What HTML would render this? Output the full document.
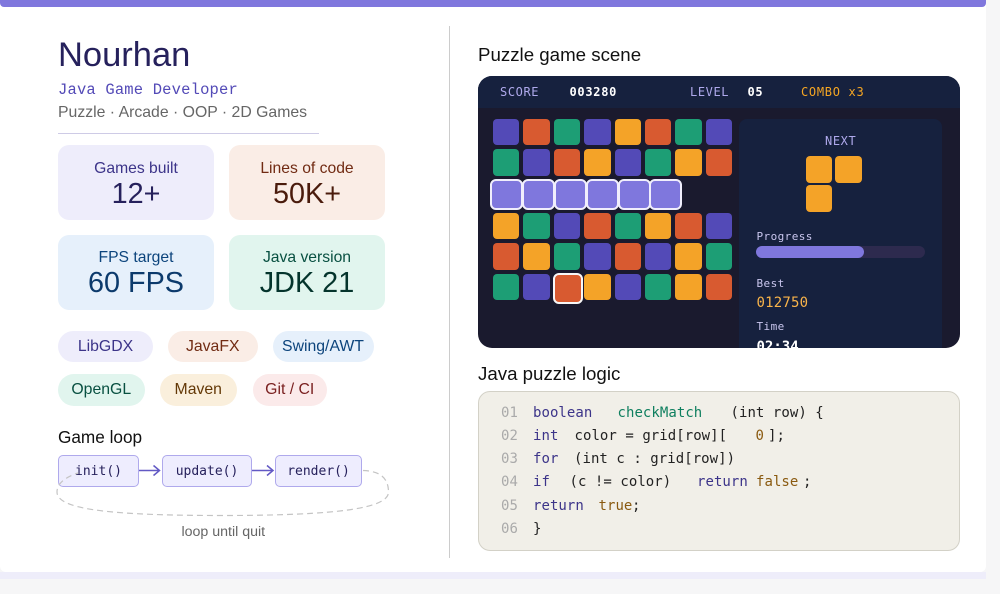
<!DOCTYPE html>
<html><head><meta charset="utf-8"><style>
html,body{margin:0;padding:0;width:1000px;height:594px;overflow:hidden;background:#f6f6f7}
*{box-sizing:border-box}
body{position:relative;font-family:"Liberation Sans",sans-serif}
.a,.t,.c span,.h span{position:absolute;white-space:pre}
.card{position:absolute;left:0;top:0;width:986px;height:572px;background:#fff;border-radius:0 0 6px 6px}
.strip{position:absolute;left:0;top:572px;width:986px;height:7px;background:#eeedfa}
.top{position:absolute;left:0;top:0;width:986px;height:7px;background:#7f77dd;border-radius:0 0 4px 4px}
.s{position:absolute;width:156px;height:75px;border-radius:11px;text-align:center}
.s div{position:absolute;left:0;right:0;white-space:nowrap}
.s .l{top:14.5px;font-size:15.7px;line-height:18px}
.s .v{top:31.5px;font-size:28.8px;line-height:34px}
.p{position:absolute;height:31.5px;border-radius:16px;text-align:center;font-size:15.8px;line-height:31.5px}
.f{position:absolute;top:455px;height:32px;background:#eeedfe;border:1px solid #afa9ec;border-radius:5px;text-align:center;font:13px/32px "DejaVu Sans Mono",monospace;color:#26215c}
.game{position:absolute;left:478px;top:75.5px;width:482px;height:272px;background:#1a1a2e;border-radius:14px;overflow:hidden}
.hud{position:absolute;left:0;top:0;width:482px;height:32.5px;background:#16213e}
.h span{top:8.5px;font:12px/16px "DejaVu Sans Mono",monospace}
.side{position:absolute;left:261px;top:43.5px;width:203px;height:240px;background:#16213e;border-radius:8px}
.k{position:absolute;width:26.6px;height:26.6px;border-radius:4px}
.P{background:#534ab7}.R{background:#d85a30}.G{background:#1d9e75}.A{background:#f4a328}
.S{position:absolute;width:33px;height:31px;background:#7f77dd;border:2px solid #f0eefc;border-radius:6px}
.c{position:absolute;left:478px;top:391px;width:482px;height:160px;background:#f1efe8;border:1px solid #d3d1c7;border-radius:12px}
.c span{font:14px/18px "DejaVu Sans Mono",monospace;letter-spacing:.05px;color:#222}
.c .n{color:#aaa}.c .w{color:#3c3489}.c .g{color:#0f7f5f}.c .o{color:#8a5a10}
</style></head><body>
<div class="card"></div><div class="strip"></div><div class="top"></div>
<div class="a" style="left:449px;top:26px;width:1px;height:532px;background:#ccc"></div>

<div class="t" style="left:58px;top:35px;font-size:34.5px;line-height:40px;color:#26215c">Nourhan</div>
<div class="t" style="left:58px;top:81px;font:15.5px/18px 'Liberation Mono',monospace;letter-spacing:.17px;color:#534ab7">Java Game Developer</div>
<div class="t" style="left:58px;top:104px;font-size:15.8px;line-height:18px;color:#666">Puzzle · Arcade · OOP · 2D Games</div>
<div class="a" style="left:58px;top:132.5px;width:261px;height:1px;background:#cecbe6"></div>

<div class="s" style="left:58px;top:145px;background:#eeedfb"><div class="l" style="color:#3c3489">Games built</div><div class="v" style="color:#26215c">12+</div></div>
<div class="s" style="left:229px;top:145px;background:#faede6"><div class="l" style="color:#712b13">Lines of code</div><div class="v" style="color:#4a1b0c">50K+</div></div>
<div class="s" style="left:58px;top:234.5px;background:#e6f0fb"><div class="l" style="color:#0c447c">FPS target</div><div class="v" style="color:#0c3a6c">60 FPS</div></div>
<div class="s" style="left:229px;top:234.5px;background:#e1f5ee"><div class="l" style="color:#085041">Java version</div><div class="v" style="color:#04342c">JDK 21</div></div>

<div class="p" style="left:58px;top:330.5px;width:95px;background:#eeedfb;color:#3c3489">LibGDX</div>
<div class="p" style="left:168px;top:330.5px;width:89.5px;background:#faede6;color:#712b13">JavaFX</div>
<div class="p" style="left:272.5px;top:330.5px;width:101px;background:#e6f0fb;color:#0c447c">Swing/AWT</div>
<div class="p" style="left:58px;top:374px;width:86.5px;background:#e1f5ee;color:#085041">OpenGL</div>
<div class="p" style="left:159.5px;top:374px;width:77.5px;background:#faefdc;color:#633806">Maven</div>
<div class="p" style="left:252.5px;top:374px;width:74.5px;background:#fbeaea;color:#791f1f">Git / CI</div>

<div class="t" style="left:58px;top:426.5px;font-size:17.2px;line-height:20px;color:#111">Game loop</div>
<div class="f" style="left:58px;width:81px">init()</div>
<div class="f" style="left:162px;width:90px">update()</div>
<div class="f" style="left:275px;width:87px">render()</div>
<svg class="a" style="left:0;top:0" width="1000" height="594" fill="none">
<path d="M139 470.5H159M153.500 465.500L159.500 470.500L153.500 475.500M252 470.500H272.500M267 465.500L273 470.500L267 475.500" stroke="#6259c4" stroke-width="1.500"/>
<path d="M363 470.500C380 471 388.500 478 388.500 492C388.500 508 340 515.500 222 515.500C100 515.500 57 508 57 492C57 483 66 477 78 473" stroke="#c4c4c4" stroke-width="1.200" stroke-dasharray="6 4"/>
</svg>
<div class="t" style="left:181.500px;top:524px;font-size:14.2px;line-height:16px;color:#666">loop until quit</div>

<div class="t" style="left:478px;top:44px;font-size:18.7px;line-height:21px;color:#111">Puzzle game scene</div>
<div class="game">
<div class="hud"></div>
<div class="h">
<span style="left:22px;color:#afa9ec;letter-spacing:.6px">SCORE</span>
<span style="left:91.500px;color:#fff;font-weight:bold;letter-spacing:.7px">003280</span>
<span style="left:212px;color:#afa9ec;letter-spacing:.6px">LEVEL</span>
<span style="left:269.500px;color:#fff;font-weight:bold;letter-spacing:.7px">05</span>
<span style="left:323px;color:#f5a623;letter-spacing:.7px">COMBO x3</span>
</div>
<div class="side"></div>
<div class="t" style="left:347px;top:57px;font:12px/16px 'DejaVu Sans Mono',monospace;letter-spacing:.6px;color:#afa9ec">NEXT</div>
<div class="k A" style="left:327.500px;top:80.500px"></div><div class="k A" style="left:357px;top:80.500px"></div><div class="k A" style="left:327.500px;top:109.500px"></div>
<div class="t" style="left:278.500px;top:153px;font:11px/15px 'DejaVu Sans Mono',monospace;letter-spacing:.42px;color:#c9c6ee">Progress</div>
<div class="a" style="left:278px;top:170.500px;width:169px;height:12px;border-radius:6px;background:#2d2a4e"></div>
<div class="a" style="left:278px;top:170.500px;width:108px;height:12px;border-radius:6px;background:#7f77dd"></div>
<div class="t" style="left:278.500px;top:200px;font:11px/15px 'DejaVu Sans Mono',monospace;letter-spacing:.42px;color:#c9c6ee">Best</div>
<div class="t" style="left:278.500px;top:219px;font:14px/17px 'DejaVu Sans Mono',monospace;letter-spacing:.2px;color:#f9b44a">012750</div>
<div class="t" style="left:278.500px;top:243px;font:11px/15px 'DejaVu Sans Mono',monospace;letter-spacing:.42px;color:#c9c6ee">Time</div>
<div class="t" style="left:278.500px;top:263px;font:bold 14px/17px 'DejaVu Sans Mono',monospace;color:#fff">02:34</div>

<div class="k P" style="left:14.500px;top:43px"></div><div class="k R" style="left:45px;top:43px"></div><div class="k G" style="left:75.500px;top:43px"></div><div class="k P" style="left:106px;top:43px"></div><div class="k A" style="left:136.500px;top:43px"></div><div class="k R" style="left:166.500px;top:43px"></div><div class="k G" style="left:197px;top:43px"></div><div class="k P" style="left:227.500px;top:43px"></div>
<div class="k G" style="left:14.500px;top:73.500px"></div><div class="k P" style="left:45px;top:73.500px"></div><div class="k R" style="left:75.500px;top:73.500px"></div><div class="k A" style="left:106px;top:73.500px"></div><div class="k P" style="left:136.500px;top:73.500px"></div><div class="k G" style="left:166.500px;top:73.500px"></div><div class="k A" style="left:197px;top:73.500px"></div><div class="k R" style="left:227.500px;top:73.500px"></div>
<div class="S" style="left:11.500px;top:103px"></div><div class="S" style="left:43.500px;top:103px"></div><div class="S" style="left:75.500px;top:103px"></div><div class="S" style="left:107.500px;top:103px"></div><div class="S" style="left:139.500px;top:103px"></div><div class="S" style="left:171px;top:103px"></div>
<div class="k A" style="left:14.500px;top:137px"></div><div class="k G" style="left:45px;top:137px"></div><div class="k P" style="left:75.500px;top:137px"></div><div class="k R" style="left:106px;top:137px"></div><div class="k G" style="left:136.500px;top:137px"></div><div class="k A" style="left:166.500px;top:137px"></div><div class="k R" style="left:197px;top:137px"></div><div class="k P" style="left:227.500px;top:137px"></div>
<div class="k R" style="left:14.500px;top:167.500px"></div><div class="k A" style="left:45px;top:167.500px"></div><div class="k G" style="left:75.500px;top:167.500px"></div><div class="k P" style="left:106px;top:167.500px"></div><div class="k R" style="left:136.500px;top:167.500px"></div><div class="k P" style="left:166.500px;top:167.500px"></div><div class="k A" style="left:197px;top:167.500px"></div><div class="k G" style="left:227.500px;top:167.500px"></div>
<div class="k G" style="left:14.500px;top:198px"></div><div class="k P" style="left:45px;top:198px"></div><div class="k R" style="left:74.500px;top:197px;width:30.500px;height:31px;border:2px solid #f7f7f7;border-radius:6px"></div><div class="k A" style="left:106px;top:198px"></div><div class="k P" style="left:136.500px;top:198px"></div><div class="k G" style="left:166.500px;top:198px"></div><div class="k A" style="left:197px;top:198px"></div><div class="k R" style="left:227.500px;top:198px"></div>
</div>

<div class="t" style="left:478px;top:363px;font-size:18.7px;line-height:21px;color:#111">Java puzzle logic</div>
<div class="c">
<span class="n" style="left:22px;top:11.500px">01</span><span class="w" style="left:54px;top:11.500px">boolean</span><span class="g" style="left:138.500px;top:11.500px">checkMatch</span><span style="left:251.500px;top:11.500px">(int row) {</span>
<span class="n" style="left:22px;top:35px">02</span><span class="w" style="left:54px;top:35px">int</span><span style="left:95.500px;top:35px">color = grid[row][</span><span class="o" style="left:276.500px;top:35px">0</span><span style="left:289px;top:35px">];</span>
<span class="n" style="left:22px;top:58px">03</span><span class="w" style="left:54px;top:58px">for</span><span style="left:95px;top:58px">(int c : grid[row])</span>
<span class="n" style="left:22px;top:81px">04</span><span class="w" style="left:54px;top:81px">if</span><span style="left:90.500px;top:81px">(c != color)</span><span class="w" style="left:218px;top:81px">return</span><span class="o" style="left:277px;top:81px">false</span><span style="left:324px;top:81px">;</span>
<span class="n" style="left:22px;top:104.500px">05</span><span class="w" style="left:54px;top:104.500px">return</span><span class="o" style="left:119.500px;top:104.500px">true</span><span style="left:153px;top:104.500px">;</span>
<span class="n" style="left:22px;top:127.500px">06</span><span style="left:54px;top:127.500px">}</span>
</div>
</body></html>
